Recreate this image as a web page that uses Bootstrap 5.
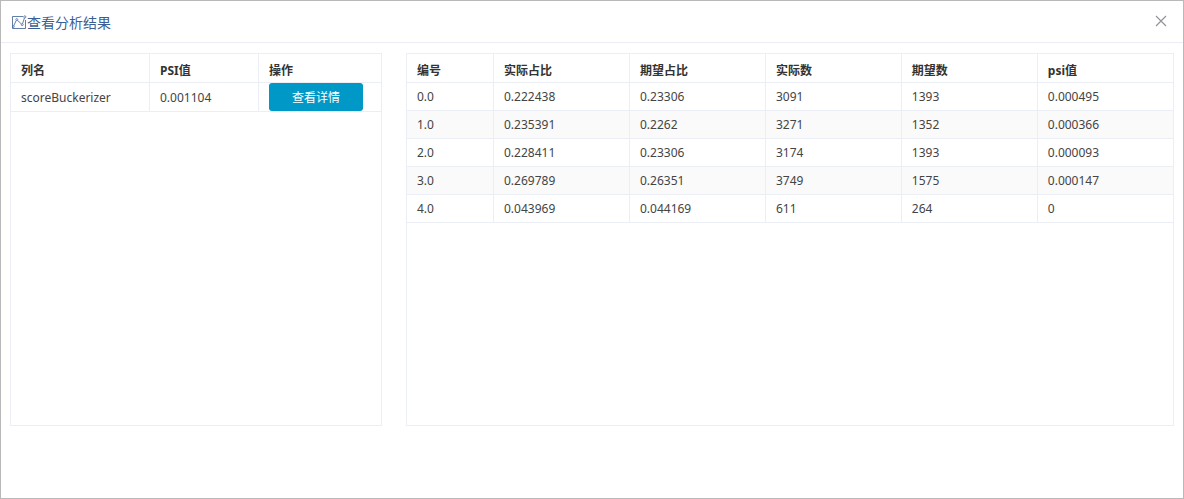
<!DOCTYPE html>
<html lang="zh-CN">
<head>
<meta charset="utf-8">
<meta name="viewport" content="width=device-width, initial-scale=1">
<title>查看分析结果</title>
<link href="https://cdn.jsdelivr.net/npm/bootstrap@5.3.0/dist/css/bootstrap.min.css" rel="stylesheet">
<style>
  body { font-family: "Noto Sans", "Noto Sans CJK SC", sans-serif; font-size: 12px; line-height: 18px; color: #444; }
  .dialog-frame { border: 1px solid #b9b9b9; }
  .dialog-head { height: 42px; padding: 0 10px; border-bottom: 1px solid #ebeef5; }
  .dialog-title { font-size: 14px; line-height: 20px; padding-top: 2px; color: #3c5f93; }
  .dialog-close { width: 24px; height: 24px; margin-bottom: 2px; color: #909399; }
  .dialog-main { padding: 10px 9px 72px; }
  .panel-box { border: 1px solid #ebeef5; }
  .data-grid { table-layout: fixed; border-collapse: separate; border-spacing: 0; }
  .data-grid th, .data-grid td { padding: 0 10px; border-right: 1px solid #ebeef5; border-bottom: 1px solid #ebeef5; white-space: nowrap; }
  .data-grid th { height: 29px; padding-top: 6px; color: #333; }
  .data-grid td { height: 28px; }
  .data-grid.summary td { height: 29px; padding-top: 2px; }
  .data-grid.summary td.action-cell { padding-top: 0; }
  .data-grid th:last-child, .data-grid td:last-child { border-right: 0; }
  .data-grid.detail tbody tr:nth-child(even) { background: #fafafa; }
  .w-name { width: 139px; }
  .w-psi { width: 109px; }
  .w-id { width: 87px; }
  .w-value { width: 17.75%; }
  .btn-detail { --bs-btn-color: #fff; --bs-btn-bg: #0099c7; --bs-btn-hover-color: #fff; --bs-btn-hover-bg: #0087b0; --bs-btn-border-width: 0; --bs-btn-border-radius: 3px; --bs-btn-padding-x: 0; --bs-btn-padding-y: 0; --bs-btn-font-size: 12px; width: 94px; height: 28px; line-height: 30px; }
</style>
</head>
<body>
<div class="dialog-frame d-flex flex-column min-vh-100 bg-white" role="dialog" aria-labelledby="dialog-title">
  <header class="dialog-head d-flex align-items-center justify-content-between">
    <h1 class="dialog-title fw-normal d-flex align-items-center m-0" id="dialog-title">
      <svg width="16" height="16" viewBox="0 0 16 16" fill="none" stroke="currentColor" aria-hidden="true">
        <path d="M12 1.5H1.5v12h13V5" stroke-width=".8"/>
        <path d="M2.6 11L5.2 5.6M6.6 5.4L10.4 9M11.6 8.6L13.4 3" stroke-width=".8"/>
        <g stroke-width=".7"><circle cx="2.4" cy="11.8" r=".9"/><circle cx="5.8" cy="4.6" r="1"/><circle cx="11.2" cy="9.6" r="1"/><circle cx="13.8" cy="1.9" r="1.1"/></g>
      </svg>
      <span>查看分析结果</span>
    </h1>
    <button type="button" class="dialog-close btn border-0 p-0 d-flex align-items-center justify-content-center" aria-label="关闭">
      <svg width="12" height="12" viewBox="0 0 12 12" fill="none" stroke="currentColor" stroke-width="1.2"><path d="M1 1l10 10M11 1L1 11"/></svg>
    </button>
  </header>
  <main class="dialog-main flex-grow-1 d-flex flex-column">
    <div class="row flex-grow-1">
      <section class="col-4 d-flex">
        <div class="panel-box w-100">
          <table class="data-grid summary w-100">
            <colgroup><col class="w-name"><col class="w-psi"><col></colgroup>
            <thead><tr><th>列名</th><th>PSI值</th><th>操作</th></tr></thead>
            <tbody><tr><td>scoreBuckerizer</td><td>0.001104</td><td class="action-cell"><button type="button" class="btn btn-detail d-block">查看详情</button></td></tr></tbody>
          </table>
        </div>
      </section>
      <section class="col-8 d-flex">
        <div class="panel-box w-100">
          <table class="data-grid detail w-100">
            <colgroup><col class="w-id"><col class="w-value"><col class="w-value"><col class="w-value"><col class="w-value"><col></colgroup>
            <thead><tr><th>编号</th><th>实际占比</th><th>期望占比</th><th>实际数</th><th>期望数</th><th>psi值</th></tr></thead>
            <tbody>
              <tr><td>0.0</td><td>0.222438</td><td>0.23306</td><td>3091</td><td>1393</td><td>0.000495</td></tr>
              <tr><td>1.0</td><td>0.235391</td><td>0.2262</td><td>3271</td><td>1352</td><td>0.000366</td></tr>
              <tr><td>2.0</td><td>0.228411</td><td>0.23306</td><td>3174</td><td>1393</td><td>0.000093</td></tr>
              <tr><td>3.0</td><td>0.269789</td><td>0.26351</td><td>3749</td><td>1575</td><td>0.000147</td></tr>
              <tr><td>4.0</td><td>0.043969</td><td>0.044169</td><td>611</td><td>264</td><td>0</td></tr>
            </tbody>
          </table>
        </div>
      </section>
    </div>
  </main>
</div>
<script src="https://cdn.jsdelivr.net/npm/bootstrap@5.3.0/dist/js/bootstrap.bundle.min.js"></script>
</body>
</html>
